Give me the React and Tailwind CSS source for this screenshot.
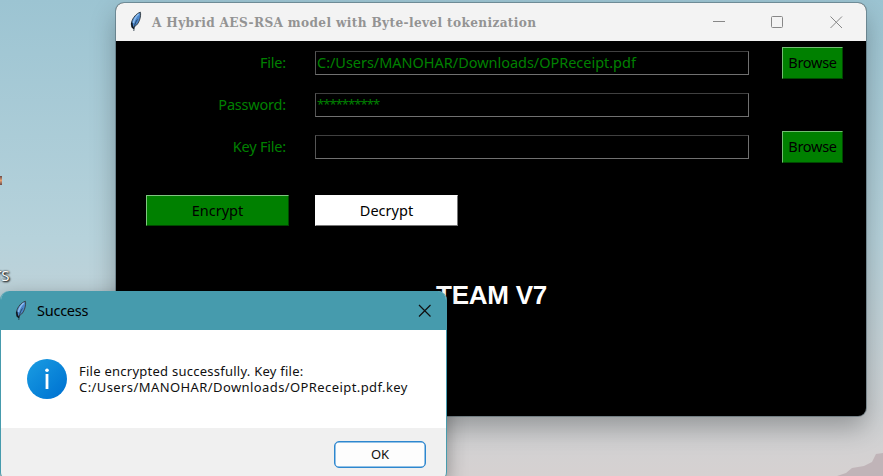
const UI = "font-['Noto_Sans','Open_Sans',sans-serif]";

function Feather({ className }) {
  return (
    <svg className={className} width="12" height="22" viewBox="0 0 12 22" fill="none">
      <path d="M10.400 1.200C6.500 2.400 2.600 6.600 1.500 11.600c-.4 2 0 3.900 1 4.900 2.800-.8 5.700-3.300 7-7.300 1-3 1.400-6 .9-8z" fill="#4a86cc" stroke="#3a444b" strokeWidth="1" />
      <path d="M8.800 3C6.200 5.200 4.200 8.400 3.400 12" stroke="#8fbdec" strokeWidth="1.600" />
      <path d="M7.400 8.500C5.600 11 4.300 14 3.800 20" stroke="#20303d" strokeWidth="0.800" />
      <path d="M1.700 11.500l.7 4.800 1.800 1.200" stroke="#101820" strokeWidth="1.600" />
    </svg>
  );
}

function Entry({ children }) {
  return (
    <div className="flex h-[24px] w-[434px] items-center border border-t-[#404040] border-l-[#555] border-r-[#707070] border-b-[#707070] bg-black pl-[1px] text-[#008000]">
      {children}
    </div>
  );
}

function Browse() {
  return (
    <button className="ml-[33px] flex h-[32px] w-[61px] items-center justify-center border border-t-[#73bd73] border-l-[#73bd73] border-r-[#004800] border-b-[#004800] bg-[#008000] text-[14.500px] tracking-[-0.3px] text-black">
      Browse
    </button>
  );
}

function Row({ label, className, children, browse }) {
  return (
    <div className={`flex h-[32px] items-center ${className}`}>
      <div className="mr-[29px] w-[170px] text-right tracking-[-0.200px] whitespace-nowrap">{label}</div>
      <Entry>{children}</Entry>
      {browse && <Browse />}
    </div>
  );
}

function MainWindow() {
  return (
    <section className="absolute top-[3px] left-[116px] h-[413px] w-[750px] overflow-hidden rounded-[8px] bg-black shadow-[0_0_0_1px_rgba(70,90,100,0.5),0_12px_26px_rgba(0,0,0,0.28)]">
      <header className="flex h-[38px] items-center bg-[#f3f3f3] pl-[14px]">
        <Feather />
        <h1 className="ml-[10px] font-['DejaVu_Serif_Condensed','DejaVu_Serif',serif] text-[13.500px] font-bold tracking-[0.350px] whitespace-nowrap text-[#939393]">
          A Hybrid AES-RSA model with Byte-level tokenization
        </h1>
        <svg className="mr-[23px] ml-auto" width="130" height="14" viewBox="0 0 130 14" fill="none" stroke="#878787" strokeWidth="1">
          <path d="M0 6.500h12M117.500 1.500l11.500 11.500M129 1.500l-11.500 11.500" />
          <rect x="58.500" y="1.500" width="11" height="11" rx="1" />
        </svg>
      </header>
      <div className={`flex flex-col text-[14.500px] text-[#008000] ${UI}`}>
        <Row label="File:" className="mt-[6px]" browse>
          <span className="tracking-[-0.030px] whitespace-nowrap">C:/Users/MANOHAR/Downloads/OPReceipt.pdf</span>
        </Row>
        <Row label="Password:" className="mt-[10px]">
          <span className="text-[13px] tracking-[-0.950px]">**********</span>
        </Row>
        <Row label="Key File:" className="mt-[10px]" browse />
        <div className="mt-[32px] ml-[30px] flex gap-[26px] text-black">
          <button className="h-[31px] w-[143px] border border-t-[#80c480] border-l-[#80c480] border-r-[#004800] border-b-[#004800] bg-[#008000]">
            Encrypt
          </button>
          <button className="h-[31px] w-[143px] border border-t-white border-l-white border-r-[#777] border-b-[#777] bg-white">
            Decrypt
          </button>
        </div>
        <div className="mt-[54px] ml-[320px] font-['Liberation_Sans',sans-serif] text-[26px] leading-[30px] font-bold tracking-[-0.250px] text-white">
          TEAM V7
        </div>
      </div>
    </section>
  );
}

function SuccessDialog() {
  return (
    <section className={`absolute top-[291px] left-0 flex h-[190px] w-[447px] flex-col overflow-hidden rounded-[9px] border-x border-[#469bad] bg-[#f0f0f0] text-[#101010] shadow-[0_6px_20px_rgba(0,0,0,0.35)] ${UI}`}>
      <header className="flex h-[39px] shrink-0 items-center bg-[#469bad] pl-[14px]">
        <Feather />
        <h2 className="ml-[10px] text-[14.500px] tracking-[-0.250px] text-black">Success</h2>
        <svg className="mr-[15px] ml-auto" width="13" height="13" viewBox="0 0 13 13" stroke="#101010" strokeWidth="1.200">
          <path d="M1 1l11.500 11.500M12.500 1L1 12.500" />
        </svg>
      </header>
      <div className="flex h-[98px] shrink-0 items-center bg-white pl-[26px]">
        <div className="flex h-[40px] w-[40px] items-center justify-center rounded-full bg-linear-to-br from-[#1b9de2] to-[#006fd0]">
          <svg width="6" height="22" viewBox="0 0 6 22" fill="white">
            <circle cx="3" cy="2.200" r="1.800" />
            <rect x="1.600" y="6" width="2.800" height="15" />
          </svg>
        </div>
        <p className="ml-[12px] text-[13px] leading-[16px] whitespace-nowrap">
          <span className="tracking-[0.250px]">File encrypted successfully. Key file:</span>
          <br />
          <span className="tracking-[0.410px]">C:/Users/MANOHAR/Downloads/OPReceipt.pdf.key</span>
        </p>
      </div>
      <footer className="flex justify-end pt-[13px] pr-[20px]">
        <button className="flex h-[27px] w-[92px] items-center justify-center rounded-[5px] border border-[#2d87cf] bg-[#fdfdfd] pt-[1px] text-[13px] shadow-[inset_0_0_0_0.5px_#2d87cf]">
          OK
        </button>
      </footer>
    </section>
  );
}

export default function App() {
  return (
    <main className="relative h-[476px] w-[883px] overflow-hidden bg-linear-to-b from-[#9cc4d2] via-[#b6d2db] via-50% to-[#d6d1d1]">
      <svg className="absolute right-0 bottom-0" width="50" height="26" viewBox="0 0 50 26">
        <path d="M4 26l9-3 6-5 12-2 8-4 4-8 7-1v23z" fill="#c0b4b8" />
      </svg>
      <div className="absolute top-[176px] left-0 h-[9px] w-[2px] bg-linear-to-b from-[#6a4a48] via-[#e8a070] to-[#6a4a48]" />
      <div className={`absolute top-[265px] left-[-7px] text-[15px] leading-[20px] text-white [text-shadow:1px_1px_2px_#000,0_0_2px_#000] ${UI}`}>
        TS
      </div>
      <MainWindow />
      <SuccessDialog />
    </main>
  );
}
